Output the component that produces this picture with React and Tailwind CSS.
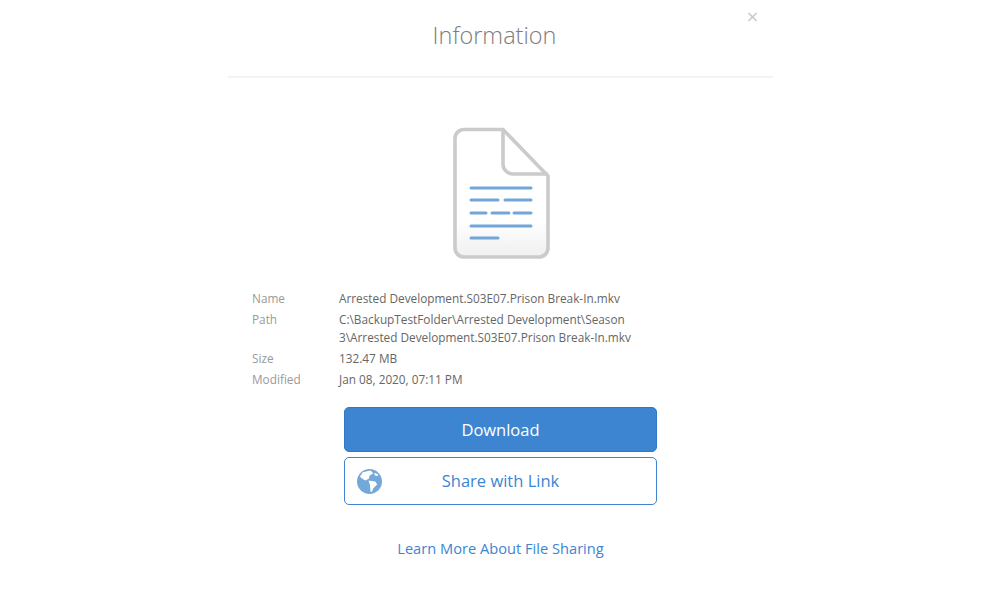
export default function App() {
  const rows = [
    ["Name", "Arrested Development.S03E07.Prison Break-In.mkv"],
    ["Path", "C:\\BackupTestFolder\\Arrested Development\\Season 3\\Arrested Development.S03E07.Prison Break-In.mkv"],
    ["Size", "132.47 MB"],
    ["Modified", "Jan 08, 2020, 07:11 PM"],
  ];
  return (
    <div className="min-h-[600px] w-full bg-white flex pl-[228px] font-['Open_Sans',sans-serif]">
      <div className="w-[545px] relative flex flex-col">
        <button className="absolute left-[519px] top-[11px] w-3 h-3 text-[#c9c9c9]">
          <svg viewBox="0 0 12 12" className="w-3 h-3"><path d="M1.500 2l8 8M9.500 2l-8 8" stroke="currentColor" strokeWidth="1.6" fill="none" /></svg>
        </button>
        <div className="h-[78px] border-b-2 border-[#f3f3f3] flex justify-center pt-[18px]">
          <h1 className="mr-[12px] text-[23.500px] leading-[34px] font-light text-[#7c7c7c]">Information</h1>
        </div>
        <div className="flex justify-center mt-[48px]">
          <svg width="100" height="136" viewBox="0 0 100 136" fill="none">
            <defs>
              <linearGradient id="g" x1="0" y1="0" x2="0" y2="1">
                <stop offset="0.72" stopColor="#ffffff" />
                <stop offset="0.95" stopColor="#f2f2f2" />
              </linearGradient>
            </defs>
            <path d="M13 3.500H52L97 50V122a9 9 0 0 1-9 9H13a9 9 0 0 1-9-9V12.500a9 9 0 0 1 9-9Z" fill="url(#g)" stroke="#cbcbcb" strokeWidth="3.6" strokeLinejoin="round" />
            <path d="M52 3.500V38a10 10 0 0 0 10 10H97" stroke="#cbcbcb" strokeWidth="3.6" />
            <g stroke="#72a5d8" strokeWidth="3" strokeLinecap="round">
              <path d="M20 62H80" />
              <path d="M20 74H47M54 74H80" />
              <path d="M20 87H35M41 87H58M63 87H80" />
              <path d="M20 100H80" />
              <path d="M20 112H47" />
            </g>
          </svg>
        </div>
        <div className="mt-[27px] ml-[24px] grid grid-cols-[87px_295px] gap-y-[3px] text-[11.8px] leading-[18px]">
          {rows.map(([k, v]) => (
            <div key={k} className="contents">
              <div className="text-[#999999]">{k}</div>
              <div className="text-[#666666]">{v}</div>
            </div>
          ))}
        </div>
        <div className="mt-[19px] flex flex-col items-center gap-[5px]">
          <button className="w-[313px] h-[45px] pt-[1px] rounded-[5px] bg-[#3d85d1] border border-[#2f78c4] text-white text-[16.500px]">Download</button>
          <button className="relative w-[313px] h-[48px] rounded-[5px] bg-white border border-[#3d85d1] text-[#3d85d1] text-[16.500px]">
            <svg className="absolute left-[12px] top-[11px]" width="25" height="25" viewBox="0 0 26 26">
              <circle cx="13" cy="13" r="13" fill="#73a8da" />
              <path d="M3 8 6 3.500 14 1.500 17 4.500 13 7 12.500 10 9 12 6 10.500Z" fill="#ffffff" />
              <path d="M12 12 19 13 21 16 17 20 15.500 24 14 23.500 13.500 17Z" fill="#ffffff" />
              <path d="M18 4 22 5.500 21 7.500 18.500 6.500Z" fill="#ffffff" />
            </svg>
            Share with Link
          </button>
        </div>
        <a className="mt-[33px] text-center text-[14.650px] leading-[20px] text-[#3d85d1]">Learn More About File Sharing</a>
      </div>
    </div>
  );
}
